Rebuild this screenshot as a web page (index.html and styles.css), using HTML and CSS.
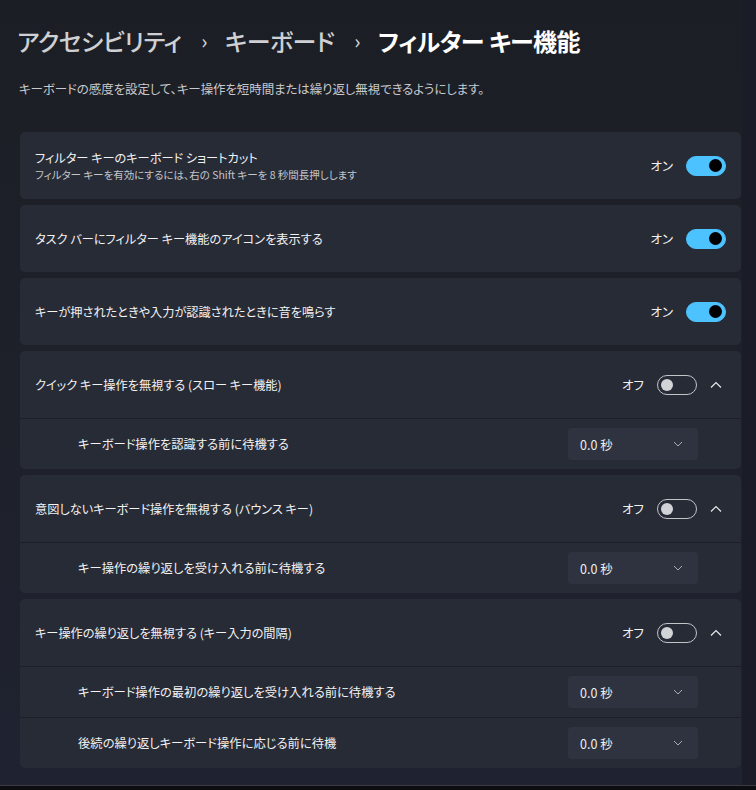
FILE: index.html
```html
<!DOCTYPE html>
<html lang="ja">
<head>
<meta charset="utf-8">
<link rel="stylesheet" href="styles.css">
</head>
<body>
<div class="window">
  <div class="content">
    <h1 class="title">
      <span class="crumb">アクセシビリティ</span>
      <span class="sep">›</span>
      <span class="crumb">キーボード</span>
      <span class="sep">›</span>
      <span class="current">フィルター キー機能</span>
    </h1>
    <p class="intro">キーボードの感度を設定して、キー操作を短時間または繰り返し無視できるようにします。</p>

    <div class="list">
      <div class="card">
        <div class="row head">
          <div class="text">
            <div class="label">フィルター キーのキーボード ショートカット</div>
            <div class="desc">フィルター キーを有効にするには、右の Shift キーを 8 秒間長押しします</div>
          </div>
          <div class="ctrl">
            <span class="state">オン</span>
            <span class="toggle on"><span class="knob"></span></span>
          </div>
        </div>
      </div>

      <div class="card">
        <div class="row head">
          <div class="text"><div class="label">タスク バーにフィルター キー機能のアイコンを表示する</div></div>
          <div class="ctrl">
            <span class="state">オン</span>
            <span class="toggle on"><span class="knob"></span></span>
          </div>
        </div>
      </div>

      <div class="card">
        <div class="row head">
          <div class="text"><div class="label">キーが押されたときや入力が認識されたときに音を鳴らす</div></div>
          <div class="ctrl">
            <span class="state">オン</span>
            <span class="toggle on"><span class="knob"></span></span>
          </div>
        </div>
      </div>

      <div class="card">
        <div class="row head expander">
          <div class="text"><div class="label">クイック キー操作を無視する (スロー キー機能)</div></div>
          <div class="ctrl">
            <span class="state">オフ</span>
            <span class="toggle"><span class="knob"></span></span>
            <svg class="chev-up" width="12" height="8" viewBox="0 0 12 8"><path d="M1 6.5 L6 1.5 L11 6.5" fill="none" stroke="#e8e8e8" stroke-width="1.2"/></svg>
          </div>
        </div>
        <div class="row sub">
          <div class="label">キーボード操作を認識する前に待機する</div>
          <div class="select"><span>0.0 秒</span><svg width="10" height="6" viewBox="0 0 10 6"><path d="M1 1 L5 5 L9 1" fill="none" stroke="#a9abb2" stroke-width="1"/></svg></div>
        </div>
      </div>

      <div class="card">
        <div class="row head expander">
          <div class="text"><div class="label">意図しないキーボード操作を無視する (バウンス キー)</div></div>
          <div class="ctrl">
            <span class="state">オフ</span>
            <span class="toggle"><span class="knob"></span></span>
            <svg class="chev-up" width="12" height="8" viewBox="0 0 12 8"><path d="M1 6.5 L6 1.5 L11 6.5" fill="none" stroke="#e8e8e8" stroke-width="1.2"/></svg>
          </div>
        </div>
        <div class="row sub">
          <div class="label">キー操作の繰り返しを受け入れる前に待機する</div>
          <div class="select"><span>0.0 秒</span><svg width="10" height="6" viewBox="0 0 10 6"><path d="M1 1 L5 5 L9 1" fill="none" stroke="#a9abb2" stroke-width="1"/></svg></div>
        </div>
      </div>

      <div class="card">
        <div class="row head expander">
          <div class="text"><div class="label">キー操作の繰り返しを無視する (キー入力の間隔)</div></div>
          <div class="ctrl">
            <span class="state">オフ</span>
            <span class="toggle"><span class="knob"></span></span>
            <svg class="chev-up" width="12" height="8" viewBox="0 0 12 8"><path d="M1 6.5 L6 1.5 L11 6.5" fill="none" stroke="#e8e8e8" stroke-width="1.2"/></svg>
          </div>
        </div>
        <div class="row sub">
          <div class="label">キーボード操作の最初の繰り返しを受け入れる前に待機する</div>
          <div class="select"><span>0.0 秒</span><svg width="10" height="6" viewBox="0 0 10 6"><path d="M1 1 L5 5 L9 1" fill="none" stroke="#a9abb2" stroke-width="1"/></svg></div>
        </div>
        <div class="row sub">
          <div class="label">後続の繰り返しキーボード操作に応じる前に待機</div>
          <div class="select"><span>0.0 秒</span><svg width="10" height="6" viewBox="0 0 10 6"><path d="M1 1 L5 5 L9 1" fill="none" stroke="#a9abb2" stroke-width="1"/></svg></div>
        </div>
      </div>
    </div>
  </div>
  <div class="scrollbar"></div>
</div>
<div class="taskbar"></div>
</body>
</html>
```

FILE: styles.css
```css
* { box-sizing: border-box; }
html, body { margin: 0; padding: 0; }
body {
  width: 756px;
  height: 790px;
  overflow: hidden;
  background: #1e2029;
  font-family: "Noto Sans CJK JP", "Noto Sans", sans-serif;
  font-feature-settings: "palt";
  color: #ffffff;
}
.window {
  display: flex;
  height: 785px;
  background: linear-gradient(180deg, #1c1e25 0%, #1e212a 50%, #1f2230 100%);
}
.content {
  flex: 1;
  padding: 23px 1px 0 20px;
}
.scrollbar {
  width: 14px;
  background: #1a1d27;
}
.taskbar {
  height: 5px;
  background: #0c0d10;
  border-top: 1px solid #3a3c42;
}
.title {
  margin: 0 0 0 -3px;
  height: 36px;
  line-height: 36px;
  font-size: 24px;
  font-weight: 500;
  letter-spacing: -0.5px;
  white-space: nowrap;
}
.crumb { color: #cfd0d3; }
.sep {
  color: #cfd0d3;
  font-size: 20px;
  margin: 0 13px 0 15px;
  position: relative;
  top: -2px;
}
.current { color: #ffffff; font-weight: 700; }
.intro {
  margin: 21px 0 0 -1px;
  font-size: 12.5px;
  line-height: 18px;
  color: #c8c9cc;
  letter-spacing: -0.1px;
}
.list {
  margin-top: 34px;
  display: flex;
  flex-direction: column;
  gap: 6px;
}
.card {
  background: #272b36;
  border-radius: 5px;
  overflow: hidden;
}
.row {
  display: flex;
  align-items: center;
  justify-content: space-between;
}
.head {
  height: 67px;
  padding: 0 15px;
}
.head.expander { padding-right: 19px; }
.sub {
  height: 51px;
  border-top: 1px solid #1c1f28;
  padding: 0 43px 0 58px;
}
.label {
  font-size: 12.2px;
  line-height: 18px;
  color: #f2f2f3;
}
.sub .label { font-size: 12.3px; }
.desc {
  font-size: 10.5px;
  line-height: 16px;
  color: #c4c5c9;
}
.ctrl {
  display: flex;
  align-items: center;
}
.state {
  font-size: 12.5px;
  color: #f2f2f3;
  margin-right: 13px;
}
.toggle {
  width: 40px;
  height: 20px;
  border-radius: 10px;
  border: 1px solid #c3c4c8;
  display: flex;
  align-items: center;
  padding: 0 3px;
}
.toggle .knob {
  width: 12px;
  height: 12px;
  border-radius: 50%;
  background: #d2d3d7;
}
.toggle.on {
  background: #4cc2ff;
  border-color: #4cc2ff;
  justify-content: flex-end;
  padding: 0 3px;
}
.toggle.on .knob {
  width: 13px;
  height: 13px;
  background: #000000;
}
.chev-up {
  margin-left: 13px;
}
.select {
  width: 130px;
  height: 32px;
  background: #2f333f;
  border-radius: 4px;
  display: flex;
  align-items: center;
  justify-content: space-between;
  padding: 0 15px 0 12px;
  font-size: 12.5px;
  color: #eeeeef;
}
```
